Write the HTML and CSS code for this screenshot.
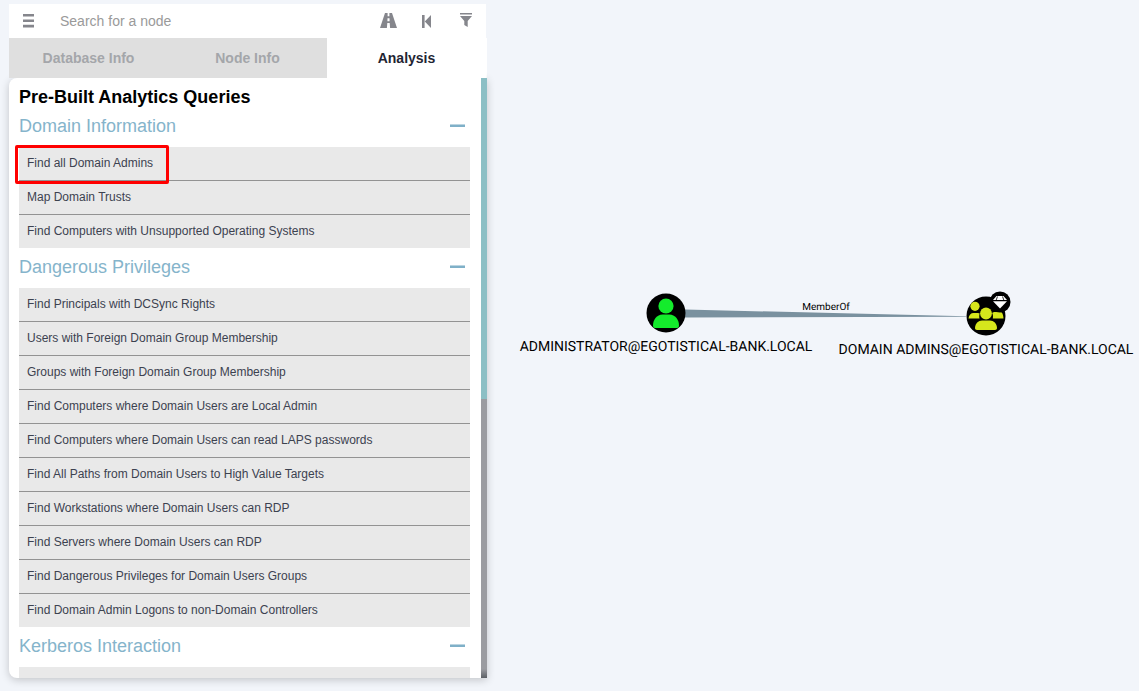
FILE: index.html
```html
<!DOCTYPE html>
<html>
<head>
    <title>BloodHound</title>
    <link rel="stylesheet" href="styles.css">
</head>
<body>
    <div class="sidebar">
        <div class="searchbar">
            <svg class="icon-menu" width="11" height="14" viewBox="0 0 11 14"><path d="M0 0h11v2.600H0zM0 5.400h11V8H0zM0 10.800h11v2.600H0z"/></svg>
            <span class="search-text">Search for a node</span>
            <svg class="icon-road" width="17" height="15" viewBox="0 0 17 15"><path d="M5 0h2.600v3.200h1.800V0H12l5 15h-6.900l-.4-5H7.300l-.4 5H0zM7.500 5.200l-.1 3h2.200l-.1-3z" fill-rule="evenodd"/></svg>
            <svg class="icon-back" width="9" height="13" viewBox="0 0 9 13"><path d="M0 0h2.600v13H0zM2.800 6.500L9 0v13z"/></svg>
            <svg class="icon-filter" width="12" height="14" viewBox="0 0 12 14"><path d="M0 0h12v1.600H0zM0 3h12L7.700 8V14L4.300 12V8z"/></svg>
        </div>
        <div class="tabs">
            <div class="tab">Database Info</div>
            <div class="tab">Node Info</div>
            <div class="tab tab-active">Analysis</div>
        </div>
        <div class="panel">
            <div class="panel-content">
                <h1 class="panel-title">Pre-Built Analytics Queries</h1>

                <div class="section-head"><span>Domain Information</span><span class="collapse"></span></div>
                <ul class="query-list">
                    <li class="query marked">Find all Domain Admins<span class="redbox"></span></li>
                    <li class="query">Map Domain Trusts</li>
                    <li class="query">Find Computers with Unsupported Operating Systems</li>
                </ul>

                <div class="section-head"><span>Dangerous Privileges</span><span class="collapse"></span></div>
                <ul class="query-list">
                    <li class="query">Find Principals with DCSync Rights</li>
                    <li class="query">Users with Foreign Domain Group Membership</li>
                    <li class="query">Groups with Foreign Domain Group Membership</li>
                    <li class="query">Find Computers where Domain Users are Local Admin</li>
                    <li class="query">Find Computers where Domain Users can read LAPS passwords</li>
                    <li class="query">Find All Paths from Domain Users to High Value Targets</li>
                    <li class="query">Find Workstations where Domain Users can RDP</li>
                    <li class="query">Find Servers where Domain Users can RDP</li>
                    <li class="query">Find Dangerous Privileges for Domain Users Groups</li>
                    <li class="query">Find Domain Admin Logons to non-Domain Controllers</li>
                </ul>

                <div class="section-head"><span>Kerberos Interaction</span><span class="collapse"></span></div>
                <ul class="query-list">
                    <li class="query"></li>
                </ul>
            </div>
            <div class="scrollbar"><div class="scrollbar-thumb"></div></div>
        </div>
    </div>

    <!-- graph canvas -->
    <svg class="graph" width="1139" height="691" viewBox="0 0 1139 691">
        <path class="edge" d="M685 309.500L966 316.200V316.800L685 317.500z"/>
        <text class="edge-label" x="826" y="310">MemberOf</text>

        <circle cx="666" cy="313" r="19.500" fill="#000"/>
        <circle cx="666" cy="306" r="7.600" fill="#14ec2c"/>
        <path d="M653 325.500c0-6 4-11 9.500-11h7c5.500 0 9.500 5 9.500 11 0 1.500-.8 2.500-2 2.500h-22c-1.200 0-2-1-2-2.500z" fill="#14ec2c"/>
        <text class="node-label" x="666" y="351">ADMINISTRATOR@EGOTISTICAL-BANK.LOCAL</text>

        <circle cx="986" cy="316" r="19.500" fill="#000"/>
        <circle cx="975" cy="306.300" r="4.600" fill="#d6e61c"/>
        <circle cx="986" cy="313.500" r="5.900" fill="#d6e61c"/>
        <path d="M968.500 318.500c.3-3.500 2.500-5.500 5-5.500h4.500c.8 0 1.300.2 1.700.5-.6 1.600-.6 3.400-.2 5z" fill="#d6e61c"/>
        <path d="M992.800 318.500c.4-2.200.2-3.900-.6-5.500.7-.6 1.600-1 3-1h5c1.800 0 3 1.800 3.300 6.500z" fill="#d6e61c"/>
        <path d="M975 328c0-4.500 3.500-7.500 7-7.500h8c3.500 0 7 3 7 7.500 0 1.200-.8 2-2 2h-18c-1.200 0-2-.8-2-2z" fill="#d6e61c"/>
        <circle cx="1000" cy="302" r="10.500" fill="#000"/>
        <path d="M996.500 296h7l3.500 4h-14z" fill="#fff"/>
        <path d="M993 301.300h14l-7 7.200z" fill="#fff"/>
        <path d="M997.500 296.500l-1.300 3.500M1002.500 296.500l1.300 3.500" stroke="#000" stroke-width=".8" fill="none"/>
        <text class="node-label" x="986" y="354">DOMAIN ADMINS@EGOTISTICAL-BANK.LOCAL</text>
    </svg>
</body>
</html>
```

FILE: styles.css
```css
html, body {
    margin: 0;
    padding: 0;
    height: 691px;
    overflow: hidden;
}

body {
    font-family: "Liberation Sans", Arial, sans-serif;
    background-color: #f2f5fa;
}

.sidebar {
    position: relative;
    z-index: 2;
    width: 478px;
    margin: 4px 0 0 9px;
}

.searchbar {
    display: flex;
    align-items: center;
    height: 34px;
    width: 477px;
    background-color: #fff;
    fill: #85868c;
}

.icon-menu {
    margin-left: 14px;
}

.search-text {
    margin-left: 26px;
    flex: 1;
    font-size: 14px;
    color: #9a9a9a;
}

.icon-road {
    margin: -2px 0 0 0;
}

.icon-back {
    margin: 0 0 0 25px;
}

.icon-filter {
    margin: -2px 14px 0 29px;
}

.tabs {
    display: flex;
    box-sizing: border-box;
    height: 40px;
    width: 478px;
    padding-right: 1px;
    background-color: #fff;
}

.tab {
    flex: 1;
    display: flex;
    align-items: center;
    justify-content: center;
    background-color: #dfdfdf;
    color: #a4a6aa;
    font-size: 14px;
    font-weight: bold;
}

.tab-active {
    background-color: #fff;
    color: #1f2533;
}

.panel {
    display: flex;
    height: 600px;
    overflow: hidden;
    background-color: #fff;
    border-radius: 8px 0 0 8px;
    box-shadow: 0 2px 8px rgba(0, 0, 0, 0.2);
}

.panel-content {
    flex: 1;
    padding: 0 11px 0 10px;
    overflow: hidden;
}

.panel-title {
    margin: 0;
    padding-top: 8px;
    font-size: 18px;
    line-height: 22px;
    color: #000;
}

.section-head {
    display: flex;
    justify-content: space-between;
    align-items: center;
    height: 26px;
    margin-bottom: 8px;
    font-size: 18px;
    color: #85b4cb;
}

.panel-title + .section-head {
    margin-top: 5px;
}

.query-list + .section-head {
    margin-top: 6px;
}

.collapse {
    width: 15px;
    height: 2px;
    margin-right: 5px;
    background-color: #7fb0c8;
    box-shadow: 0 -1px 0 #bcd5e1;
}

.query-list {
    list-style: none;
    margin: 0;
    padding: 0;
}

.query {
    position: relative;
    box-sizing: border-box;
    height: 34px;
    padding-left: 8px;
    line-height: 32px;
    font-size: 12px;
    color: #3c4250;
    background-color: #e9e9e9;
    border-bottom: 1px solid #939393;
}

.query:last-child {
    border-bottom: none;
    height: 33px;
}

.marked {
    z-index: 1;
}

.redbox {
    position: absolute;
    left: -4px;
    top: -2px;
    width: 148px;
    height: 33px;
    border: 3px solid #f00;
    border-radius: 2px;
}

.scrollbar {
    flex: none;
    width: 6px;
    background: linear-gradient(to bottom, #9b9ca1 98.500%, #5c6066);
}

.scrollbar-thumb {
    height: 321px;
    background-color: #8cbfc5;
}

.graph {
    position: absolute;
    left: 0;
    top: 0;
}

.edge {
    fill: #7a919f;
}

.edge-label {
    font-family: Roboto, sans-serif;
    font-size: 10px;
    text-anchor: middle;
    text-rendering: geometricPrecision;
    fill: #000;
}

.node-label {
    font-family: Roboto, sans-serif;
    font-size: 14px;
    text-anchor: middle;
    text-rendering: geometricPrecision;
    fill: #000;
}
```
